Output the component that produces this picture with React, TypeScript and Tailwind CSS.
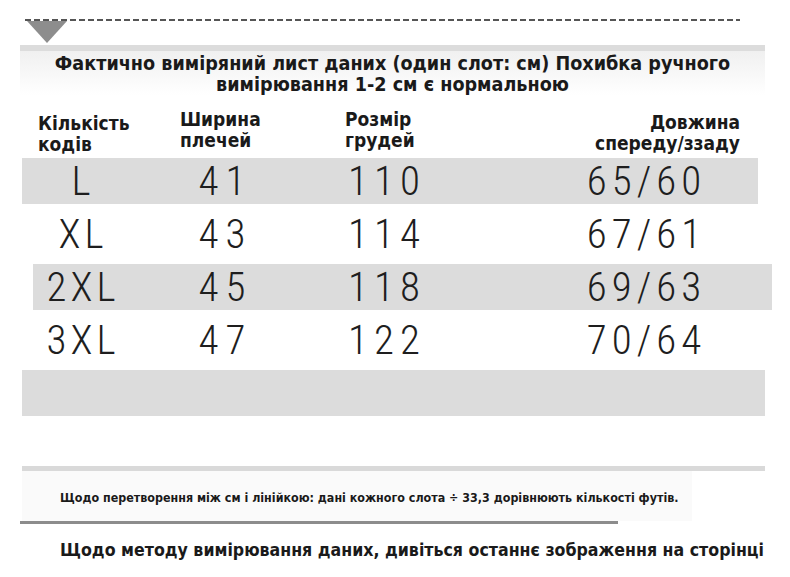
const rows = [
  { size: "L", shoulder: "41", chest: "110", length: "65/60", shade: "ml-[22px] w-[736px] bg-[#dcdcdc]", pad: "pl-[19px]" },
  { size: "XL", shoulder: "43", chest: "114", length: "67/61", shade: "ml-[22px] w-[736px]", pad: "pl-[19px]" },
  { size: "2XL", shoulder: "45", chest: "118", length: "69/63", shade: "ml-[33px] w-[739px] bg-[#dcdcdc]", pad: "pl-[8px]" },
  { size: "3XL", shoulder: "47", chest: "122", length: "70/64", shade: "ml-[22px] w-[736px]", pad: "pl-[19px]" },
  { size: "", shoulder: "", chest: "", length: "", shade: "ml-[22px] w-[743px] bg-[#dcdcdc]", pad: "pl-[19px]" },
];

function SizeRow({ row }: { row: (typeof rows)[number] }) {
  return (
    <div className={`h-[46px] mb-[7px] ${row.shade}`}>
      <div className={`flex h-full items-center font-['Roboto',sans-serif] font-light text-[41px] leading-none text-[#1e1e1e] ${row.pad}`}>
        <div className="w-[80px] text-center tracking-[4px] pl-[4px]">{row.size}</div>
        <div className="ml-[61px] w-[80px] text-center tracking-[7px] pl-[7px]">{row.shoulder}</div>
        <div className="ml-[72px] w-[100px] text-center tracking-[6px] pl-[6px]">{row.chest}</div>
        <div className="ml-[140px] w-[140px] text-center tracking-[5px] pl-[5px]">{row.length}</div>
      </div>
    </div>
  );
}

export default function App() {
  return (
    <div className="w-[790px] h-[577px] bg-white overflow-hidden text-[#1a1a1a] font-['DejaVu_Sans_Condensed','DejaVu_Sans',sans-serif] font-stretch-condensed">
      <div className="pt-[19px] pl-[25px]">
        <div className="w-[715px] h-[2px] bg-[repeating-linear-gradient(90deg,#555_0_6px,transparent_6px_9px)]" />
      </div>
      <svg className="ml-[27px] block" width="40" height="22" viewBox="0 0 40 22">
        <polygon points="0,0 40,0 20,22" fill="#8d8d8d" />
      </svg>
      <div className="ml-[20px] w-[745px] h-[6px] mt-[2px] bg-[#dcdcdc]" />

      <div className="ml-[20px] w-[745px] bg-gradient-to-b from-[#f0f0f0] to-white pt-[2px] text-center text-[19.6px] leading-[21px] font-bold whitespace-nowrap">
        Фактично виміряний лист даних (один слот: см) Похибка ручного
        <br />
        вимірювання 1-2 см є нормальною
      </div>

      <div className="mt-[18px] flex pl-[38px] pr-[50px] text-[19px] leading-[21px] font-bold">
        <div className="w-[142px]">
          Кількість
          <br />
          кодів
        </div>
        <div className="w-[165px] -mt-[4px]">
          Ширина
          <br />
          плечей
        </div>
        <div className="flex-1 -mt-[4px]">
          Розмір
          <br />
          грудей
        </div>
        <div className="text-right -mt-[1px]">
          Довжина
          <br />
          спереду/ззаду
        </div>
      </div>

      <div className="mt-[3px]">
        {rows.map((row, i) => (
          <SizeRow key={i} row={row} />
        ))}
      </div>

      <div className="mt-[50px] ml-[22px] w-[743px] h-[5px] bg-[#d9d9d9]" />
      <div className="ml-[22px] w-[670px] bg-[#fafafa] pt-[19px] pb-[15px] pl-[38px] text-[12.4px] leading-[16px] font-bold whitespace-nowrap">
        Щодо перетворення між см і лінійкою: дані кожного слота ÷ 33,3 дорівнюють кількості футів.
      </div>
      <div className="ml-[20px] w-[598px] h-[3px] bg-[#8c8c8c]" />
      <div className="mt-[15px] pl-[60px] text-[17.6px] leading-[22px] font-bold whitespace-nowrap">
        Щодо методу вимірювання даних, дивіться останнє зображення на сторінці
      </div>
    </div>
  );
}
